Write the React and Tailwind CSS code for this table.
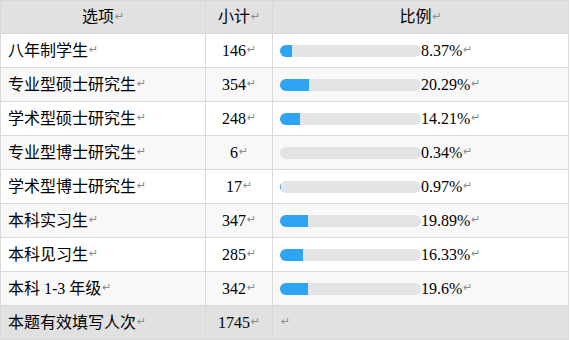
const rows = [
  { name: '八年制学生', count: 146, pct: '8.37%', v: 8.37 },
  { name: '专业型硕士研究生', count: 354, pct: '20.29%', v: 20.29 },
  { name: '学术型硕士研究生', count: 248, pct: '14.21%', v: 14.21 },
  { name: '专业型博士研究生', count: 6, pct: '0.34%', v: 0.34 },
  { name: '学术型博士研究生', count: 17, pct: '0.97%', v: 0.97 },
  { name: '本科实习生', count: 347, pct: '19.89%', v: 19.89 },
  { name: '本科见习生', count: 285, pct: '16.33%', v: 16.33 },
  { name: '本科 1-3 年级', count: 342, pct: '19.6%', v: 19.6 },
];

function Mark() {
  return <span className="text-[11px] text-[#8a8a8a] font-['DejaVu_Sans',sans-serif] ml-px">↵</span>;
}

function Bar({ v }) {
  // track is 141px wide; fill rounded to whole pixels
  return (
    <div className="w-[141px] h-[12px] rounded-full bg-[#e3e4e6] overflow-hidden">
      <div className="h-full bg-[#2ea4f4]" style={{ width: `${Math.round((v / 100) * 141)}px` }} />
    </div>
  );
}

export default function App() {
  return (
    <div className="w-[570px] h-[340px] bg-white font-['Liberation_Serif','Noto_Sans_CJK_SC',serif] text-[16px] text-black">
      <div className="w-[569px] border-l border-t border-[#d9d9d9]">
        <div className="flex h-[33px] bg-[#e1e1e1] border-b border-[#d9d9d9]">
          <div className="w-[205px] border-r border-[#d9d9d9] flex items-center justify-center">选项<Mark /></div>
          <div className="w-[67px] border-r border-[#d9d9d9] flex items-center justify-center">小计<Mark /></div>
          <div className="w-[296px] border-r border-[#d9d9d9] flex items-center justify-center">比例<Mark /></div>
        </div>
        {rows.map((r, i) => (
          <div key={r.name} className={`flex h-[34px] border-b border-[#d9d9d9] ${i % 2 ? 'bg-[#f8f8f8]' : 'bg-white'}`}>
            <div className="w-[205px] border-r border-[#d9d9d9] flex items-center pl-[7px]">{r.name}<Mark /></div>
            <div className="w-[67px] border-r border-[#d9d9d9] flex items-center justify-center">{r.count}<Mark /></div>
            <div className="w-[296px] border-r border-[#d9d9d9] flex items-center pl-[7px]">
              <Bar v={r.v} />
              <span>{r.pct}</span><Mark />
            </div>
          </div>
        ))}
        <div className="flex h-[34px] bg-[#e1e1e1] border-b border-[#d9d9d9]">
          <div className="w-[205px] border-r border-[#d9d9d9] flex items-center pl-[7px]">本题有效填写人次<Mark /></div>
          <div className="w-[67px] border-r border-[#d9d9d9] flex items-center justify-center">1745<Mark /></div>
          <div className="w-[296px] border-r border-[#d9d9d9] flex items-center pl-[7px]"><Mark /></div>
        </div>
      </div>
    </div>
  );
}
